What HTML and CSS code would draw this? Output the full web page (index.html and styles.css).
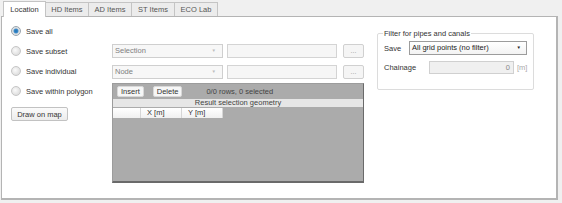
FILE: index.html
```html
<!DOCTYPE html>
<html lang="en">
  <head>
    <meta charset="UTF-8" />
    <title>Result selection</title>
    <link rel="stylesheet" href="styles.css">
  </head>
  <body>
    <div class="tabs">
      <div class="tab active">Location</div>
      <div class="tab">HD Items</div>
      <div class="tab">AD Items</div>
      <div class="tab">ST Items</div>
      <div class="tab">ECO Lab</div>
    </div>
    <div class="panel">
      <div class="left">
        <label class="radio-row"><span class="radio checked"></span>Save all</label>
        <label class="radio-row"><span class="radio"></span>Save subset</label>
        <label class="radio-row"><span class="radio"></span>Save individual</label>
        <label class="radio-row"><span class="radio"></span>Save within polygon</label>
        <button class="btn draw-btn">Draw on map</button>
      </div>
      <div class="middle">
        <div class="field-row">
          <div class="combo disabled">Selection<span class="arrow">&#9660;</span></div>
          <div class="textbox"></div>
          <button class="btn dots">...</button>
        </div>
        <div class="field-row">
          <div class="combo disabled">Node<span class="arrow">&#9660;</span></div>
          <div class="textbox"></div>
          <button class="btn dots">...</button>
        </div>
        <div class="grid-box">
          <div class="toolbar">
            <button class="btn small">Insert</button>
            <button class="btn small">Delete</button>
            <span class="rows-info">0/0 rows, 0 selected</span>
          </div>
          <div class="caption">Result selection geometry</div>
          <div class="grid-head">
            <div class="cell first"></div>
            <div class="cell">X [m]</div>
            <div class="cell">Y [m]</div>
          </div>
        </div>
      </div>
      <div class="right">
        <fieldset class="group">
          <legend>Filter for pipes and canals</legend>
          <div class="group-row">
            <span class="lbl">Save</span>
            <div class="combo active-combo">All grid points (no filter)<span class="arrow dark">&#9660;</span></div>
          </div>
          <div class="group-row">
            <span class="lbl">Chainage</span>
            <div class="number-box">0</div>
            <span class="unit">[m]</span>
          </div>
        </fieldset>
      </div>
    </div>
  </body>
</html>
```

FILE: styles.css
```css
body {
  margin: 0;
  padding: 0;
  width: 562px;
  height: 203px;
  background-color: #f0f0f0;
  font-family: "Liberation Sans", Arial, sans-serif;
  font-size: 7.5px;
  color: #333;
  overflow: hidden;
}
.tabs {
  display: flex;
  padding: 2px 0 0 3px;
  height: 14px;
}
.tab {
  width: 43px;
  height: 14px;
  box-sizing: border-box;
  border: 1px solid #c4c4c4;
  border-bottom: none;
  border-left: none;
  background: #ececec;
  color: #555;
  text-align: center;
  line-height: 14px;
}
.tab.active {
  border-left: 1px solid #c4c4c4;
  background: #fff;
  color: #333;
  height: 16px;
  margin-top: -1px;
  line-height: 16px;
  position: relative;
  z-index: 1;
}
.panel {
  margin-left: 1px;
  width: 557px;
  height: 184px;
  box-sizing: border-box;
  border: 1px solid #b4b4b4;
  border-right-width: 2px;
  border-bottom-width: 2px;
  background: #fff;
  display: flex;
  padding: 4px 0 0 9px;
}
.left {
  width: 101px;
  display: flex;
  flex-direction: column;
}
.radio-row {
  height: 20px;
  display: flex;
  align-items: center;
  gap: 5px;
}
.radio {
  width: 8px;
  height: 8px;
  border-radius: 50%;
  border: 1px solid #c6c6c6;
  background: radial-gradient(circle at 40% 40%, #fafafa, #d4d4d4);
}
.radio.checked {
  border-color: #9aa4ac;
  background: radial-gradient(circle, #1f6fb0 0, #3b8ccc 2px, #cfd6dc 2.8px, #eef0f2 4.5px);
}
.btn {
  font-family: inherit;
  font-size: 7.5px;
  color: #333;
  background: linear-gradient(#fbfbfb, #ececec);
  border: 1px solid #c2c2c2;
  border-radius: 2px;
  padding: 0;
}
.draw-btn {
  margin-top: 6px;
  width: 57px;
  height: 14px;
}
.middle {
  width: 252px;
  padding-top: 23px;
  display: flex;
  flex-direction: column;
  gap: 7px;
}
.field-row {
  display: flex;
  height: 14px;
}
.combo {
  position: relative;
  box-sizing: border-box;
  height: 14px;
  border: 1px solid #cfcfcf;
  padding-left: 2px;
  line-height: 12px;
}
.combo.disabled {
  width: 111px;
  background: #f7f7f7;
  color: #808080;
}
.arrow {
  position: absolute;
  right: 6px;
  top: 0;
  font-size: 4.5px;
  color: #bdbdbd;
}
.arrow.dark {
  color: #222;
  right: 5px;
}
.textbox {
  width: 110px;
  margin-left: 4px;
  box-sizing: border-box;
  border: 1px solid #d4d4d4;
  background: #f6f6f6;
}
.dots {
  width: 21px;
  height: 14px;
  margin-left: 6px;
  color: #999;
  line-height: 8px;
  font-size: 7px;
  background: #f5f5f5;
  border-color: #d0d0d0;
}
.grid-box {
  margin-top: -3px;
  height: 100px;
  box-sizing: border-box;
  background: #ababab;
  border: 1px solid #9c9c9c;
  border-right-color: #6a6a6a;
  border-bottom: 2px solid #6a6a6a;
}
.toolbar {
  height: 15px;
  display: flex;
  align-items: center;
  padding: 0 0 0 4px;
  gap: 9px;
}
.btn.small {
  height: 11px;
  padding: 0 3px;
  line-height: 9px;
  background: #f6f6f6;
  border-color: #d8d8d8;
}
.rows-info {
  margin-left: 15px;
  color: #444;
}
.caption {
  height: 8px;
  line-height: 8px;
  background: #e6e6e6;
  text-align: center;
  color: #444;
}
.grid-head {
  display: flex;
  height: 10px;
  margin-top: 1px;
}
.cell {
  width: 41px;
  box-sizing: border-box;
  background: linear-gradient(#ffffff, #f0f0f0);
  border-right: 1px solid #d6d6d6;
  line-height: 10px;
  padding-left: 6px;
}
.cell.first {
  width: 28px;
}
.right {
  padding: 8px 0 0 13px;
}
.group {
  margin: 0;
  width: 157px;
  height: 61px;
  box-sizing: border-box;
  border: 1px solid #dcdcdc;
  border-radius: 2px;
  padding: 3px 0 0 6px;
}
.group legend {
  padding: 0 1px;
  margin-left: -1px;
  color: #333;
}
.group-row {
  display: flex;
  align-items: center;
  height: 14px;
  margin-bottom: 5px;
}
.lbl {
  width: 25px;
}
.active-combo {
  width: 118px;
  background: linear-gradient(#ffffff, #f3f3f3);
  border-color: #9c9c9c;
  color: #222;
}
.number-box {
  margin-left: 20px;
  width: 85px;
  height: 13px;
  box-sizing: border-box;
  border: 1px solid #d0d0d0;
  background: #f0f0f0;
  color: #888;
  text-align: right;
  padding-right: 3px;
  line-height: 11px;
}
.unit {
  margin-left: 3px;
  color: #aaa;
}
```
